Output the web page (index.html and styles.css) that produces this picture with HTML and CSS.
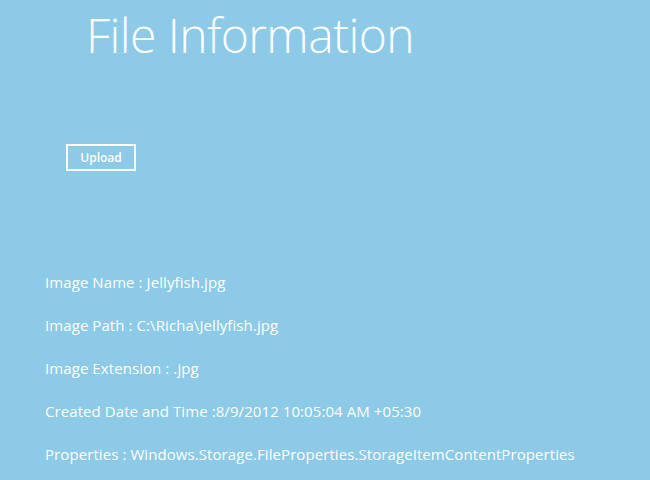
FILE: index.html
```html
<!DOCTYPE html>
<html lang="en">
<head>
  <meta charset="UTF-8" />
  <title>File Information</title>
  <link rel="stylesheet" href="styles.css">
</head>
<body>
  <div class="page">
    <h1 class="title">File Information</h1>
    <div class="actions">
      <button class="upload-btn">Upload</button>
    </div>
    <div class="info">
      <p>Image Name : Jellyfish.jpg</p>
      <p>Image Path : C:\Richa\Jellyfish.jpg</p>
      <p>Image Extension : .jpg</p>
      <p>Created Date and Time :8/9/2012 10:05:04 AM +05:30</p>
      <p>Properties : Windows.Storage.FileProperties.StorageItemContentProperties</p>
    </div>
  </div>
</body>
</html>
```

FILE: styles.css
```css
body {
  margin: 0;
  padding: 0;
  background-color: #8ccae8;
  color: #fff;
  font-family: "Open Sans", "Noto Sans", sans-serif;
  overflow: hidden;
}

.page {
  width: 650px;
  height: 480px;
}

.title {
  margin: 0;
  padding: 5px 0 0 86px;
  font-size: 48px;
  font-weight: 300;
  line-height: 60px;
  letter-spacing: -0.6px;
}

.actions {
  padding: 79px 0 0 66px;
}

.upload-btn {
  width: 70px;
  height: 27px;
  background: transparent;
  border: 2px solid #fff;
  color: #fff;
  font-family: inherit;
  font-size: 12px;
  font-weight: 600;
  padding: 0;
  cursor: pointer;
}

.info {
  padding: 100px 0 0 45px;
}

.info p {
  margin: 0 0 21px;
  font-size: 15px;
  line-height: 22px;
  letter-spacing: 0.08px;
}
```
